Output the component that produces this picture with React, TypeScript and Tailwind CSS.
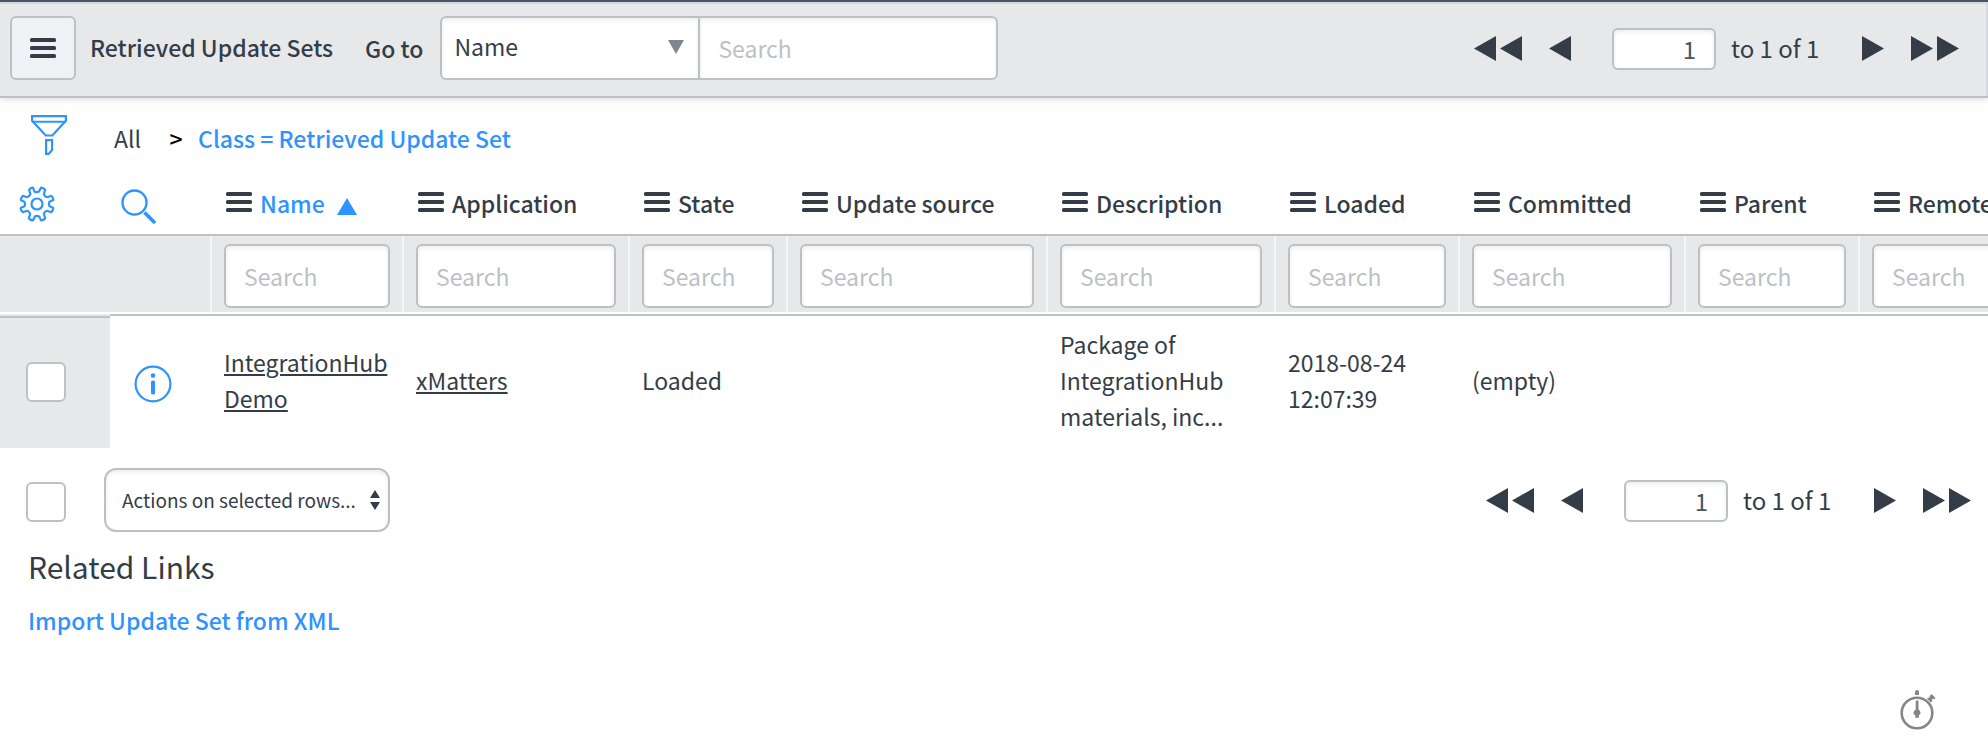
import type { ReactNode } from "react";

type Column = { label: string; width: string; sorted?: boolean };

const columns: Column[] = [
  { label: "Name", width: "w-[192px]", sorted: true },
  { label: "Application", width: "w-[226px]" },
  { label: "State", width: "w-[158px]" },
  { label: "Update source", width: "w-[260px]" },
  { label: "Description", width: "w-[228px]" },
  { label: "Loaded", width: "w-[184px]" },
  { label: "Committed", width: "w-[226px]" },
  { label: "Parent", width: "w-[174px]" },
  { label: "Remote Update Set", width: "w-[300px]" },
];

const cells: ReactNode[] = [
  <a href="#record" className="underline decoration-2 underline-offset-2">IntegrationHub Demo</a>,
  <a href="#application" className="underline decoration-2 underline-offset-2">xMatters</a>,
  "Loaded",
  "",
  "Package of IntegrationHub materials, inc...",
  "2018-08-24 12:07:39",
  "(empty)",
  "",
  "",
];

const fieldStyle =
  "border-2 border-[#bdc0c4] bg-white shadow-[inset_0_2px_4px_rgba(0,0,0,0.08)] outline-none placeholder:text-[#bdc0c6] placeholder:opacity-100";

function MenuIcon() {
  return (
    <svg width="26" height="20" viewBox="0 0 26 20" fill="#343d47" aria-hidden="true" className="shrink-0">
      <rect width="26" height="4" rx="1.500" />
      <rect y="8" width="26" height="4" rx="1.500" />
      <rect y="16" width="26" height="4" rx="1.500" />
    </svg>
  );
}

function Arrow({ back = false, double = false }: { back?: boolean; double?: boolean }) {
  const width = double ? 48 : 22;
  return (
    <svg width={width} height="26" viewBox={`0 0 ${width} 26`} fill="#343d47" aria-hidden="true">
      <path d={back ? "M22 0v25L0 12.500z" : "M0 0v25l22-12.500z"} />
      {double && <path d={back ? "M48 0v25L26 12.500z" : "M26 0v25l22-12.500z"} />}
    </svg>
  );
}

function Pager({ id }: { id: string }) {
  return (
    <div className="mt-0.5 flex items-center">
      <button type="button" aria-label="First page" className="mr-[27px]"><Arrow back double /></button>
      <button type="button" aria-label="Previous page" className="mr-[41px]"><Arrow back /></button>
      <input
        id={id}
        aria-label="Row number"
        defaultValue="1"
        className={`h-[42px] w-[104px] rounded-md pr-[18px] pb-0.5 text-right text-[24px] text-[#485566] ${fieldStyle}`}
      />
      <label htmlFor={id} className="ml-[15px] w-[131px] pb-0.5 text-[24px]">to 1 of 1</label>
      <button type="button" aria-label="Next page" className="mr-[27px]"><Arrow /></button>
      <button type="button" aria-label="Last page"><Arrow double /></button>
    </div>
  );
}

function FunnelIcon() {
  return (
    <svg width="36" height="40" viewBox="0 0 36 40" fill="none" stroke="#2e93ff" strokeWidth="2.200" aria-hidden="true">
      <path d="M1.100 1.100h33.800v4.700L21.300 20.500h-6.600L1.100 5.800z" />
      <path d="M1 6.800h34" strokeWidth="2" />
      <path d="M15.100 25.100h6v10L17.600 38.900h-2.500z" />
    </svg>
  );
}

function GearIcon() {
  return (
    <svg width="36" height="36" viewBox="0 0 36 36" fill="none" stroke="#2e93ff" strokeWidth="2.200" strokeLinejoin="round" aria-hidden="true">
      <circle cx="18" cy="18" r="5.500" />
      <path d="M15.800 5.900L13.900 1.600Q11 1.800 10 3.900L11.400 8.200Q10.200 10.600 8 11.200L3.900 9.800Q1.700 11.500 1.800 14L5.600 16Q6.700 18 5.600 20.200L1.600 22Q1.800 25 3.900 26.200L8 24.800Q10.400 25.400 11.200 28L9.800 32.200Q11.500 34.300 14 34.300L16 30.300Q18 29.500 20.200 30.400L22 34.400Q25 34.300 26.200 32.100L24.800 28Q25.400 25.500 28 24.800L32.200 26.200Q34.300 24.500 34.300 22L30.400 20Q29.500 18 30.400 15.800L34.400 14Q34.300 11.200 32.200 9.800L28 11.200Q25.500 10.600 24.800 8L26.200 3.900Q24.500 1.700 22 1.700L20 5.600Q18 6.600 15.800 5.900Z" />
    </svg>
  );
}

function SearchIcon() {
  return (
    <svg width="36" height="36" viewBox="0 0 36 36" fill="none" stroke="#2e93ff" aria-hidden="true">
      <circle cx="13.500" cy="13.500" r="12" strokeWidth="2.400" />
      <path d="M23.500 23.500L34 34" strokeWidth="3.600" />
    </svg>
  );
}

function InfoIcon() {
  return (
    <svg width="38" height="38" viewBox="0 0 38 38" fill="#2e93ff" aria-hidden="true">
      <circle cx="19" cy="19" r="17.400" fill="none" stroke="#2e93ff" strokeWidth="2.200" />
      <circle cx="19" cy="10.600" r="2.300" />
      <rect x="17" y="15.500" width="4" height="14" rx="1.500" />
    </svg>
  );
}

function StopwatchIcon() {
  return (
    <svg width="36" height="42" viewBox="0 0 36 42" fill="#858585" aria-hidden="true">
      <circle cx="17" cy="25" r="15.300" fill="none" stroke="#858585" strokeWidth="2.600" />
      <path d="M15 7V4.200Q15 2 17 2t2 2.200V7z" />
      <path d="M15.700 12.500h2.800v9q2 1.300 2 3.200t-1.600 2.500v2.500h-3.600v-2.500q-1.800-.6-1.800-2.500t2.200-3.200z" />
      <path d="M29.500 8.200l2-2.200 4 4-1.200 1.300-1.300-.5-1.200 1.200.4 1.400-1.200 1.200-4-3.800 1.200-1.200 1.500.4z" />
    </svg>
  );
}

const checkbox = "block size-10 appearance-none rounded-md border-2 border-[#bdc0c6] bg-white checked:bg-[#2e93ff]";

export default function App() {
  return (
    <div className="overflow-x-hidden bg-white font-['Noto_Sans_CJK_SC','Noto_Sans',sans-serif] text-[23px] leading-9 text-[#343d47]">
      <header className="flex h-[98px] items-start justify-between border-t-2 border-b-2 border-t-[#485566] border-b-[#bdc0c4] bg-[#e6e8ea] shadow-[0_2px_6px_rgba(0,0,0,0.12)]">
        <div className="flex h-[94px] w-full items-center justify-between border-t-2 border-r-2 border-[#d5d8df] pr-[27px] pb-1 pl-[10px]">
          <div className="flex items-center">
            <button type="button" aria-label="List menu" className="flex h-16 w-[66px] items-center justify-center rounded-md border-2 border-[#bdc0c6] bg-[#f0f1f5]">
              <MenuIcon />
            </button>
            <h1 className="ml-[14px] pb-0.5 font-medium">Retrieved Update Sets</h1>
            <label htmlFor="goto-field" className="mr-[17px] ml-8 font-medium">Go to</label>
            <div className="flex">
              <div className="relative">
                <select id="goto-field" className={`h-16 w-[260px] appearance-none rounded-l-md pb-1 pl-3 ${fieldStyle}`}>
                  <option>Name</option>
                </select>
                <svg width="16" height="14" viewBox="0 0 16 14" fill="#81878e" className="pointer-events-none absolute top-6 right-4" aria-hidden="true">
                  <path d="M0 0h16L8 14z" />
                </svg>
              </div>
              <input aria-label="Search list" placeholder="Search" className={`-ml-[2px] h-16 w-[300px] rounded-r-md pl-[18px] ${fieldStyle}`} />
            </div>
          </div>
          <Pager id="top-row" />
        </div>
      </header>

      <nav aria-label="Filter" className="flex h-[82px] items-center pb-0.5 pl-[31px]">
        <button type="button" aria-label="Show filter" className="mr-[47px] pb-1.5"><FunnelIcon /></button>
        <a href="#all">All</a>
        <span className="mr-2.5 ml-[23px] w-6 text-center text-[23px] font-medium text-black">&gt;</span>
        <a href="#class" className="font-medium text-[#2e93ff]">Class = Retrieved Update Set</a>
      </nav>

      <table className="w-[2158px] table-fixed border-separate border-spacing-0 text-left">
        <colgroup>
          <col className="w-[110px]" />
          <col className="w-[100px]" />
          {columns.map((c) => <col key={c.label} className={c.width} />)}
        </colgroup>
        <thead>
          <tr className="h-14">
            <th className="border-b-2 border-[#bdc0c4] pb-1.5 pl-[19px]">
              <button type="button" aria-label="Personalize list" className="block"><GearIcon /></button>
            </th>
            <th className="border-b-2 border-[#bdc0c4] pl-[11px]">
              <button type="button" aria-label="Toggle search row" className="block"><SearchIcon /></button>
            </th>
            {columns.map((c) => (
              <th key={c.label} className="border-b-2 border-[#bdc0c4] pb-2 pl-4 font-medium whitespace-nowrap">
                <div className="flex items-center">
                  <button type="button" aria-label={`${c.label} column options`} className="mr-2 pb-0.5"><MenuIcon /></button>
                  <a href="#sort" className={c.sorted ? "text-[#2e93ff]" : ""}>{c.label}</a>
                  {c.sorted && (
                    <svg width="20" height="17" viewBox="0 0 20 17" fill="#2e93ff" className="mt-1.5 ml-3" aria-hidden="true">
                      <path d="M10 0l10 17H0z" />
                    </svg>
                  )}
                </div>
              </th>
            ))}
          </tr>
          <tr className="bg-[#e6e8ea]">
            <td colSpan={2} className="border-b-2 border-white" />
            {columns.map((c) => (
              <td key={c.label} className="border-b-2 border-l-2 border-b-white border-l-[#f6f7f8] px-3 pt-2 pb-1">
                <input aria-label={`Search ${c.label}`} placeholder="Search" className={`block h-16 w-full rounded-md pl-[18px] ${fieldStyle}`} />
              </td>
            ))}
          </tr>
        </thead>
        <tbody>
          <tr>
            <td className="border-t-2 border-[#e6e8ea] bg-[#e6e8ea] pl-[26px] shadow-[inset_0_2px_0_#bdc0c4]">
              <input type="checkbox" aria-label="Select record IntegrationHub Demo" className={checkbox} />
            </td>
            <td className="border-t-2 border-[#bdc0c4] pl-6">
              <button type="button" aria-label="Preview record" className="mt-1 block"><InfoIcon /></button>
            </td>
            {cells.map((cell, i) => (
              <td key={columns[i].label} className="border-t-2 border-[#bdc0c4] pt-2.5 pr-2 pb-3.5 pl-[14px]">{cell}</td>
            ))}
          </tr>
        </tbody>
      </table>

      <div className="flex items-center justify-between pt-5 pr-[17px] pl-[26px]">
        <div className="flex items-center">
          <div className="pt-1">
            <input type="checkbox" aria-label="Select all records" className={checkbox} />
          </div>
          <div className="relative ml-[38px]">
            <select aria-label="Actions on selected rows" className={`block h-16 w-[286px] appearance-none rounded-xl pl-4 text-[19px] ${fieldStyle}`}>
              <option>Actions on selected rows...</option>
            </select>
            <svg width="10" height="20" viewBox="0 0 10 20" fill="#343d47" className="pointer-events-none absolute top-[22px] right-[10px]" aria-hidden="true">
              <path d="M5 0l5 8H0zM5 20l5-8H0z" />
            </svg>
          </div>
        </div>
        <Pager id="bottom-row" />
      </div>

      <section className="px-7 pt-3.5">
        <h2 className="text-[30px] leading-10">Related Links</h2>
        <a href="#import" className="mt-4 inline-block font-medium text-[#2e93ff]">Import Update Set from XML</a>
      </section>

      <button type="button" aria-label="Response time" className="fixed right-[52px] bottom-3.5">
        <StopwatchIcon />
      </button>
    </div>
  );
}
